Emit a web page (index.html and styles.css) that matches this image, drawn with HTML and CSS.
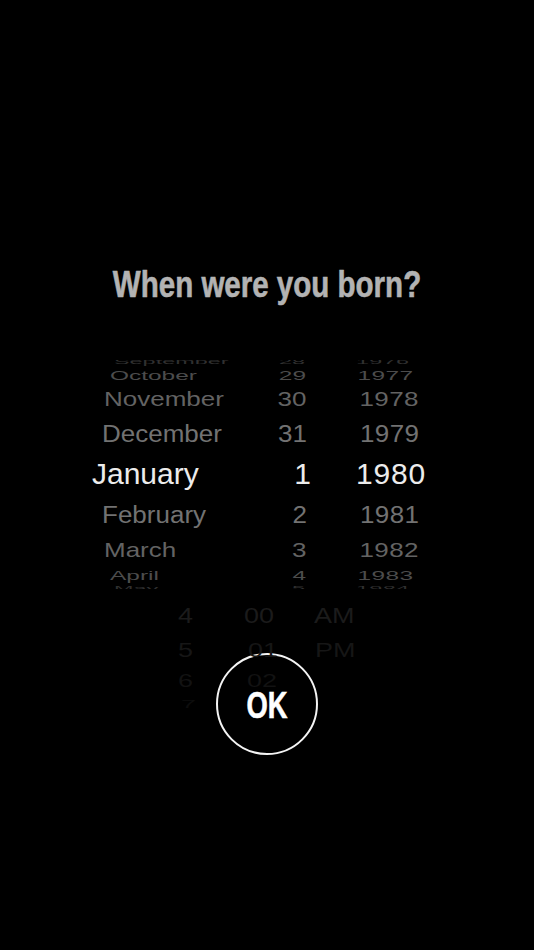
FILE: index.html
```html
<!DOCTYPE html>
<html lang="en">
<head>
<meta charset="utf-8">
<title>When were you born?</title>
<link rel="stylesheet" href="styles.css">
</head>
<body>
<main class="screen">
  <h1 class="title"><span>When were you born?</span></h1>

  <div class="wheel">
    <div class="wheel-track">
      <div class="row r-sep"><span class="m">September</span><span class="d">28</span><span class="y">1976</span></div>
      <div class="row r-oct"><span class="m">October</span><span class="d">29</span><span class="y">1977</span></div>
      <div class="row r-nov"><span class="m">November</span><span class="d">30</span><span class="y">1978</span></div>
      <div class="row r-dec"><span class="m">December</span><span class="d">31</span><span class="y">1979</span></div>
      <div class="row r-sel"><span class="m">January</span><span class="d">1</span><span class="y">1980</span></div>
      <div class="row r-feb"><span class="m">February</span><span class="d">2</span><span class="y">1981</span></div>
      <div class="row r-mar"><span class="m">March</span><span class="d">3</span><span class="y">1982</span></div>
      <div class="row r-apr"><span class="m">April</span><span class="d">4</span><span class="y">1983</span></div>
      <div class="row r-may"><span class="m">May</span><span class="d">5</span><span class="y">1984</span></div>
    </div>
  </div>

  <div class="lower">
    <div class="time-wheel">
      <div class="trow t1"><span class="h">4</span><span class="mi">00</span><span class="ap">AM</span></div>
      <div class="trow t2"><span class="h">5</span><span class="mi">01</span><span class="ap">PM</span></div>
      <div class="trow t3"><span class="h">6</span><span class="mi">02</span><span class="ap"></span></div>
      <div class="trow t4"><span class="h">7</span><span class="mi"></span><span class="ap"></span></div>
    </div>
    <button class="ok" type="button"><span>OK</span></button>
  </div>
</main>
</body>
</html>
```

FILE: styles.css
```css
html, body {
  margin: 0;
  padding: 0;
  background: #000;
}

body {
  width: 534px;
  height: 950px;
  overflow: hidden;
  font-family: "Liberation Sans", Arial, sans-serif;
}

.screen {
  display: flex;
  flex-direction: column;
}

/* ---------- title ---------- */
.title {
  margin: 267px 0 0;
  font-size: 36px;
  line-height: 36px;
  font-weight: 700;
  color: #b3b3b3;
  text-align: center;
}

.title span {
  display: inline-block;
  transform: scaleX(0.82);
  white-space: nowrap;
  -webkit-text-stroke: 0.6px #b3b3b3;
}

/* ---------- date wheel ---------- */
.wheel {
  margin-top: 57px;
  height: 229px;
  overflow: hidden;
}

.wheel-track {
  margin-top: -2px;
  display: flex;
  flex-direction: column;
}

.row {
  --h: 26px;
  --sx: 1;
  --sy: 1;
  --mx: 0px;
  --dx: 0px;
  --yx: 0px;
  --c: #727272;
  display: grid;
  grid-template-columns: 113px 61px 90px;
  column-gap: 45px;
  padding-left: 92px;
  height: var(--h);
  font-size: 26px;
  color: var(--c);
}

.row > span {
  display: block;
  height: var(--h);
  line-height: var(--h);
  white-space: nowrap;
}

.row .m {
  transform-origin: left center;
  transform: translateX(var(--mx)) scale(var(--sx), var(--sy));
}

.row .d {
  text-align: right;
  transform-origin: right center;
  transform: translateX(var(--dx)) scale(var(--sx), var(--sy));
}

.row .y {
  letter-spacing: 0.4px;
  transform-origin: left center;
  transform: translateX(var(--yx)) scale(var(--sx), var(--sy));
}

.r-sep, .r-may {
  --sx: 0.9;
  --sy: 0.26;
  --mx: 22px;
  --dx: -6px;
  --yx: 0px;
  --c: #303030;
}
.r-sep { --h: 8px; }
.r-may { --h: 8px; }

.r-oct, .r-apr {
  --sx: 0.94;
  --sy: 0.5;
  --mx: 18px;
  --dx: -5px;
  --yx: 1.5px;
  --c: #4c4c4c;
}
.r-oct { --h: 18px; }
.r-apr { --h: 20px; }

.r-nov, .r-mar {
  --sx: 1;
  --sy: 0.78;
  --mx: 12px;
  --dx: -4.5px;
  --yx: 3.5px;
  --c: #636363;
}
.r-nov { --h: 31px; }
.r-mar { --h: 30px; }

.r-dec, .r-feb {
  --sx: 1;
  --sy: 0.92;
  --mx: 10px;
  --dx: -4px;
  --yx: 4px;
  --c: #727272;
}
.r-dec { --h: 38px; }
.r-feb { --h: 40px; }

.r-sel {
  --h: 42px;
  --c: #ececec;
  font-size: 30px;
}

.r-sel .y {
  letter-spacing: 0.8px;
}

/* ---------- time wheel + OK ---------- */
.lower {
  display: grid;
  margin-top: 8px;
}

.lower > * {
  grid-area: 1 / 1;
}

.time-wheel {
  display: flex;
  flex-direction: column;
}

.trow {
  --h: 36px;
  --sy: 0.85;
  --c: #1b1b1b;
  --hx: 0px;
  --mix: 0px;
  --apx: 0px;
  display: grid;
  grid-template-columns: 66px 70px 60px;
  padding-left: 178px;
  height: var(--h);
  font-size: 27px;
  color: var(--c);
}

.trow > span {
  display: block;
  height: var(--h);
  line-height: var(--h);
  white-space: nowrap;
}

.trow .h  { transform: translateX(var(--hx)) scaleY(var(--sy)); }
.trow .mi { transform: translateX(var(--mix)) scaleY(var(--sy)); }
.trow .ap { transform: translateX(var(--apx)) scaleY(var(--sy)); }

.t1 { --h: 36px; --sy: 0.85; --c: #1b1b1b; }
.t2 { --h: 35px; --sy: 0.78; --c: #161616; --mix: 4px; --apx: 1px; }
.t3 { --h: 27px; --sy: 0.67; --c: #121212; --mix: 3px; }
.t4 { --h: 18px; --sy: 0.42; --c: #0d0d0d; --hx: 3px; --mix: 3px; }

.ok {
  justify-self: center;
  align-self: start;
  margin: 56px 0 0;
  padding: 0;
  width: 102px;
  height: 102px;
  box-sizing: border-box;
  border: 2px solid #f4f4f4;
  border-radius: 50%;
  background: #000;
  display: flex;
  align-items: center;
  justify-content: center;
  cursor: pointer;
}

.ok span {
  display: block;
  margin-top: 3px;
  font-family: "Liberation Sans", Arial, sans-serif;
  font-size: 36px;
  line-height: 36px;
  font-weight: 700;
  color: #ffffff;
  -webkit-text-stroke: 0.6px #ffffff;
  transform: scaleX(0.76);
}
```
